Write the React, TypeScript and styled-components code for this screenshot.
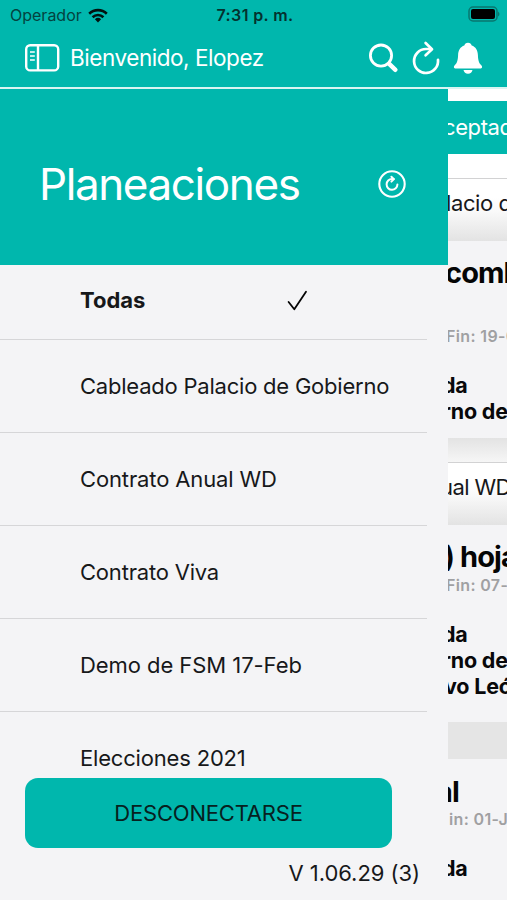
import React from "react";
import styled, { createGlobalStyle } from "styled-components";

const teal = "#00b7ad";
const panel = "#f4f4f6";

const GlobalStyle = createGlobalStyle`
  * { box-sizing: border-box; }
  body { margin: 0; background: ${panel}; font-family: Inter, "Liberation Sans", sans-serif; }
`;

const Screen = styled.div`
  width: 507px;
  height: 900px;
  display: flex;
  flex-direction: column;
  overflow: hidden;
  background: ${panel};
  color: #17181a;
`;

const StatusBar = styled.div`
  height: 30px;
  flex: none;
  display: grid;
  grid-template-columns: 1fr auto 1fr;
  align-items: center;
  padding: 0 7px 0 10px;
  background: ${teal};
  color: #04433f;
`;

const Carrier = styled.div`
  display: flex;
  align-items: center;
  gap: 6px;
  font-size: 16px;
  letter-spacing: 0;
`;

const Clock = styled.div`
  font-size: 16px;
  font-weight: 600;
  letter-spacing: 0.4px;
  color: #04312e;
`;

const Battery = styled.div`
  display: flex;
  justify-content: flex-end;
  padding-bottom: 2px;
`;

const NavBar = styled.header`
  height: 59px;
  flex: none;
  display: flex;
  align-items: center;
  padding: 0 24px 2px 24px;
  background: ${teal};
  border-bottom: 2px solid #d9f5f2;
  color: #fff;
`;

const Welcome = styled.div`
  flex: 1;
  margin-left: 10px;
  font-size: 22.5px;
  letter-spacing: -0.45px;
  white-space: nowrap;
`;

const NavActions = styled.div`
  display: flex;
  align-items: center;
  gap: 13px;
`;

const Body = styled.div`
  flex: 1;
  min-height: 0;
  display: flex;
`;

const Drawer = styled.aside`
  width: 448px;
  flex: none;
  display: flex;
  flex-direction: column;
  background: ${panel};
`;

const DrawerHeader = styled.div`
  height: 176px;
  flex: none;
  display: flex;
  align-items: center;
  justify-content: space-between;
  padding: 14px 42px 0 39px;
  background: ${teal};
  color: #fff;
`;

const Title = styled.h1`
  margin: 0;
  font-size: 44px;
  line-height: 54px;
  font-weight: 400;
  letter-spacing: -1.4px;
`;

const PlanList = styled.ul`
  height: 513px;
  flex: none;
  margin: 0;
  padding: 0;
  list-style: none;
  overflow: hidden;
`;

const PlanItem = styled.li<{ $selected?: boolean; $tracking?: number }>`
  width: 427px;
  height: ${(p) => (p.$selected ? 75 : 93)}px;
  display: flex;
  align-items: center;
  justify-content: space-between;
  padding: 0 119px ${(p) => (p.$selected ? 4 : 0)}px 80px;
  border-bottom: 1px solid #d6d6d8;
  font-size: 22px;
  font-weight: ${(p) => (p.$selected ? 700 : 400)};
  letter-spacing: ${(p) => p.$tracking ?? 0}px;
  white-space: nowrap;
`;

const LogoutButton = styled.button`
  width: 367px;
  height: 70px;
  flex: none;
  margin: 0 0 0 25px;
  padding: 0;
  border: 0;
  border-radius: 13px;
  background: ${teal};
  color: #07211f;
  font: 400 22px Inter, "Liberation Sans", sans-serif;
  letter-spacing: -0.2px;
`;

const Version = styled.div`
  height: 52px;
  padding-right: 28px;
  font-size: 22px;
  line-height: 50px;
  letter-spacing: -0.05px;
  text-align: right;
`;

const Content = styled.main`
  flex: 1;
  min-width: 0;
  overflow: hidden;
  background: #fff;
`;

const FilterTab = styled.div`
  height: 53px;
  margin: 12px 0 24px;
  background: ${teal};
  color: #fff;
  padding-top: 10px;
`;

const GroupHeader = styled.div`
  height: 63px;
  padding-top: 11px;
  border-top: 1px solid #d2d2d3;
  background: linear-gradient(#fff 30%, #fafafa 50%, #e3e3e3);
`;

const Card = styled.section<{ $height: number }>`
  height: ${(p) => p.$height}px;
  overflow: hidden;
  background: ${panel};
`;

const GroupFooter = styled.div<{ $height: number; $flat?: boolean }>`
  height: ${(p) => p.$height}px;
  background: ${(p) => (p.$flat ? "#e5e5e5" : "linear-gradient(#e3e3e3, #f6f6f6)")};
`;

const Line = styled.div<{ $shift: number; $gap?: number; $tracking?: number }>`
  margin-top: ${(p) => p.$gap ?? 0}px;
  margin-left: ${(p) => p.$shift}px;
  height: 26px;
  line-height: 26px;
  font-size: 22px;
  letter-spacing: ${(p) => p.$tracking ?? -0.4}px;
  white-space: nowrap;
`;

const CardTitle = styled(Line)`
  height: 34px;
  line-height: 34px;
  font-size: 29px;
  font-weight: 700;
  letter-spacing: -0.9px;
  color: #050505;
`;

const DateLine = styled(Line)`
  height: 20px;
  line-height: 20px;
  font-size: 16px;
  font-weight: 600;
  letter-spacing: 0.35px;
  color: #a0a0a2;
`;

const Detail = styled(Line)`
  font-size: 21.5px;
  font-weight: 700;
  letter-spacing: -0.2px;
  color: #08080a;
`;

const WifiIcon = () => (
  <svg width="20" height="15" viewBox="0 0 20 15" fill="none" stroke="#02110f" strokeWidth="2.6">
    <path d="M1.2 5.7a12.7 12.7 0 0 1 17.6 0" />
    <path d="M4.6 9.2a7.8 7.8 0 0 1 10.8 0" />
    <path d="M10 14.5 6.9 11.3a4.5 4.5 0 0 1 6.2 0Z" fill="#02110f" stroke="none" />
  </svg>
);

const BatteryIcon = () => (
  <svg width="33" height="16" viewBox="0 0 33 16">
    <rect x="2" y="1" width="28" height="14" rx="4" fill="none" stroke="#08776f" strokeWidth="1.5" />
    <rect x="4" y="3" width="24" height="10" rx="2" fill="#000" />
    <path d="M31 5.5v5q1.500-1 1.500-2.500t-1.500-2.500Z" fill="#08776f" />
  </svg>
);

const SidebarIcon = () => (
  <svg width="36" height="28" viewBox="0 0 36 28" fill="none" stroke="#fff" strokeWidth="2.4">
    <rect x="2.2" y="1.2" width="32" height="25.2" rx="4" />
    <path d="M14 1v25" />
    <path d="M6 8h4.8M6 12h4.8M6 16h4.8" strokeWidth="1.6" />
  </svg>
);

const SearchIcon = () => (
  <svg width="30" height="30" viewBox="0 0 30 30" fill="none" stroke="#fff">
    <circle cx="12" cy="12.6" r="10.6" strokeWidth="2.8" />
    <path d="m20.200 20.800 6.200 6" strokeWidth="4.400" strokeLinecap="round" />
  </svg>
);

const ReloadIcon = () => (
  <svg width="28" height="34" viewBox="0 0 28 34" fill="none" stroke="#fff" strokeWidth="2.7" strokeLinecap="round" strokeLinejoin="round">
    <path d="M26 18.800A12 12 0 1 1 14 8h4.600" />
    <path d="m13.600 2 6.400 6.300-6.400 6" />
  </svg>
);

const BellIcon = () => (
  <svg width="30" height="32" viewBox="0 0 30 32" fill="#fff">
    <path d="M15 .8c2 0 3.300 1.200 3.700 2.800 4 1.400 6 4.800 6.200 9.300.2 5.500 1.100 8 3.200 10.200 1.800 1.900.9 3.500-1 3.500H2.900c-1.900 0-2.800-1.600-1-3.500 2.100-2.200 3-4.700 3.200-10.200.2-4.500 2.200-7.900 6.200-9.300C11.700 2 13 .8 15 .8Z" />
    <path d="M10.500 28h9a4.600 4.600 0 0 1-9 0Z" />
  </svg>
);

const RefreshCircleIcon = () => (
  <svg width="28" height="28" viewBox="0 0 28 28" fill="none" stroke="#fff" strokeWidth="2" strokeLinecap="round" strokeLinejoin="round">
    <circle cx="14" cy="14" r="12.7" strokeWidth="2.1" />
    <path d="M19.400 14.500A5.400 5.400 0 1 1 14 9h1.700" />
    <path d="m13.400 6.700 2.500 2.400-2.500 2.500" />
  </svg>
);

const CheckIcon = () => (
  <svg width="21" height="21" viewBox="0 0 21 21" fill="none" stroke="#050505" strokeWidth="1.800" strokeLinecap="round" strokeLinejoin="round">
    <path d="m1.600 12 5.700 7.200L19 1.800" />
  </svg>
);

const plans = [
  { name: "Cableado Palacio de Gobierno", tracking: -0.22 },
  { name: "Contrato Anual WD", tracking: -0.13 },
  { name: "Contrato Viva", tracking: -0.2 },
  { name: "Demo de FSM 17-Feb", tracking: -0.06 },
  { name: "Elecciones 2021", tracking: -0.18 },
];

export default function App() {
  return (
    <>
      <GlobalStyle />
      <Screen>
        <StatusBar>
          <Carrier>
            Operador
            <WifiIcon />
          </Carrier>
          <Clock>7:31 p. m.</Clock>
          <Battery>
            <BatteryIcon />
          </Battery>
        </StatusBar>
        <NavBar>
          <SidebarIcon />
          <Welcome>Bienvenido, Elopez</Welcome>
          <NavActions>
            <SearchIcon />
            <ReloadIcon />
            <BellIcon />
          </NavActions>
        </NavBar>
        <Body>
          <Drawer>
            <DrawerHeader>
              <Title>Planeaciones</Title>
              <RefreshCircleIcon />
            </DrawerHeader>
            <PlanList>
              <PlanItem $selected>
                Todas
                <CheckIcon />
              </PlanItem>
              {plans.map((plan) => (
                <PlanItem key={plan.name} $tracking={plan.tracking}>
                  {plan.name}
                </PlanItem>
              ))}
            </PlanList>
            <LogoutButton>DESCONECTARSE</LogoutButton>
            <Version>V 1.06.29 (3)</Version>
          </Drawer>
          <Content>
            <FilterTab>
              <Line $gap={3} $shift={-5}>ceptadas</Line>
            </FilterTab>
            <GroupHeader>
              <Line $shift={-2}>lacio de</Line>
            </GroupHeader>
            <Card $height={197}>
              <CardTitle $gap={15} $shift={-3}>combo</CardTitle>
              <DateLine $gap={36} $shift={-2}>Fin: 19-02</DateLine>
              <Detail $gap={26} $shift={-6}>da</Detail>
              <Detail $shift={-6}>rno del</Detail>
            </Card>
            <GroupFooter $height={24} />
            <GroupHeader>
              <Line $shift={-8} $tracking={-0.6}>ual WD</Line>
            </GroupHeader>
            <Card $height={197}>
              <CardTitle $gap={15} $shift={-4}>) hojas</CardTitle>
              <DateLine $gap={1} $shift={-2}>Fin: 07-03</DateLine>
              <Detail $gap={26} $shift={-6}>da</Detail>
              <Detail $shift={-6}>rno del</Detail>
              <Detail $shift={-4}>vo León</Detail>
            </Card>
            <GroupFooter $height={37} $flat />
            <Card $height={141}>
              <CardTitle $gap={16} $shift={-12}>al</CardTitle>
              <DateLine $shift={1}>in: 01-Jun</DateLine>
              <Detail $gap={26} $shift={-6}>da</Detail>
            </Card>
          </Content>
        </Body>
      </Screen>
    </>
  );
}
